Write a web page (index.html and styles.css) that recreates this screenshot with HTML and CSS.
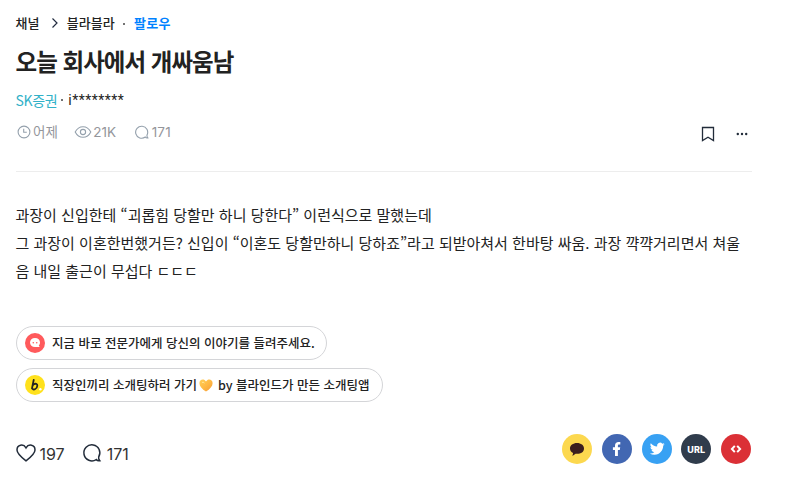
FILE: index.html
```html
<!DOCTYPE html>
<html lang="ko">
<head>
<meta charset="utf-8">
<title>오늘 회사에서 개싸움남</title>
<link rel="stylesheet" href="styles.css">
</head>
<body>
<main class="post">
  <nav class="crumbs">
    <a class="crumb-root">채널</a>
    <svg class="chevron" width="8" height="12" viewBox="0 0 8 12"><path d="M1.5 1.5 6 6 1.5 10.5"/></svg>
    <a class="crumb-topic">블라블라</a>
    <i class="dot"></i>
    <a class="follow">팔로우</a>
  </nav>
  <h1>오늘 회사에서 개싸움남</h1>
  <p class="author"><span class="company">SK증권</span><i class="dot"></i><span class="nick">i********</span></p>
  <div class="meta">
    <svg class="m-clock" width="14" height="14" viewBox="0 0 14 14"><circle cx="7" cy="7" r="5.9"/><path d="M6.7 3.7V7.2H9.8"/></svg>
    <span class="m-date">어제</span>
    <svg class="m-eye" width="18" height="14" viewBox="0 0 18 14"><path d="M1.2 7C3 3.5 5.7 1.7 9 1.7S15 3.500 16.800 7C15 10.500 12.300 12.300 9 12.300S3 10.500 1.200 7Z"/><circle cx="9" cy="7" r="2.600"/></svg>
    <span class="m-views">21K</span>
    <svg class="m-talk" width="14" height="14" viewBox="0 0 20 20"><path d="M17.200 14.200A8.600 8.600 0 1 0 14.700 17.200C15.600 18.300 16.700 18.700 18.300 18.400C17.300 17.200 16.900 15.800 17.200 14.200Z"/></svg>
    <span class="m-count">171</span>
    <div class="tools">
      <svg width="14" height="16" viewBox="0 0 14 16"><path d="M1.500 1.500H12.500V14.500L7 11.300 1.500 14.500Z"/></svg>
      <svg class="more" width="12" height="4" viewBox="0 0 12 4"><circle cx="1.800" cy="2" r="1.200"/><circle cx="6" cy="2" r="1.200"/><circle cx="10.200" cy="2" r="1.200"/></svg>
    </div>
  </div>
  <article>
    <p class="l1">과장이 신입한테 “괴롭힘 당할만 하니 당한다” 이런식으로 말했는데</p>
    <p class="l2">그 과장이 이혼한번했거든? 신입이 “이혼도 당할만하니 당하죠”라고 되받아쳐서 한바탕 싸움. 과장 꺅꺅거리면서 쳐울</p>
    <p class="l3">음 내일 출근이 무섭다 ㄷㄷㄷ</p>
  </article>
  <div class="links">
    <a class="pill"><svg width="20" height="20" viewBox="0 0 20 20"><circle cx="10" cy="10" r="10" fill="#ff5a5c"/><path d="M10 5.100C7 5.100 5 7 5 9.500S7 14 10 14H14.700L13.800 12.500C14.700 11.600 15 10.700 15 9.500C15 7 13 5.100 10 5.100Z" fill="#fff"/><circle cx="8.300" cy="9.700" r=".8" fill="#ff5a5c"/><circle cx="11.700" cy="9.700" r=".8" fill="#ff5a5c"/></svg><span class="p1">지금 바로 전문가에게 당신의 이야기를 들려주세요.</span></a>
    <a class="pill"><svg width="20" height="20" viewBox="0 0 20 20"><circle cx="10" cy="10" r="10" fill="#ffe11c"/><path d="M8.700 5 7 13.400M7.500 11C8 8.500 12.500 7.600 12.300 10.800C12.100 14.400 8 15.700 7.100 13.200" fill="none" stroke="#222" stroke-width="1.800" stroke-linecap="round" stroke-linejoin="round"/><circle cx="15.400" cy="14.300" r="1.200" fill="#fff"/></svg><span class="p2">직장인끼리 소개팅하러 가기</span><svg class="heart" width="14" height="13" viewBox="0 0 14 13"><defs><linearGradient id="gold" x2="1" y2="1"><stop stop-color="#ffcf58"/><stop offset=".5" stop-color="#ffb944"/><stop offset="1" stop-color="#f49a37"/></linearGradient></defs><path d="M7 12.500C3 10 .4 7.300.4 4.200C.4.300 5-.8 7 2.600C9-.8 13.600.300 13.600 4.200C13.600 7.300 11 10 7 12.500Z" fill="url(#gold)"/><path d="M3 3.600Q4.500 2.100 5.300 4.300" stroke="#ffe99b" fill="none"/></svg><span class="p3">by 블라인드가 만든 소개팅앱</span></a>
  </div>
  <footer>
    <svg class="f-icon" width="20" height="18" viewBox="0 0 20 18"><path d="M10 16.800C5 12.900 1 9.700 1 5.900C1 .8 7.300-.7 10 3.900C12.700-.7 19 .8 19 5.900C19 9.700 15 12.900 10 16.800Z"/></svg>
    <span class="likes">197</span>
    <svg class="f-icon" width="20" height="20" viewBox="0 0 20 20"><path d="M16.700 14A8 8 0 1 0 14.300 16.500C15.100 17.600 16.200 18 17.800 17.700C16.800 16.500 16.400 15.200 16.700 14Z"/></svg>
    <span class="comments">171</span>
    <div class="share">
      <a class="kakao"><svg width="30" height="30" viewBox="0 0 30 30"><path fill="#3b1e1e" d="M15 8.900C11 8.900 8 11.200 8 14.400C8 16.400 9.200 18.100 11.100 19L10.400 22L13.600 19.800C18.600 20.300 22 17.900 22 14.400C22 11.200 19 8.900 15 8.900Z"/></svg></a>
      <a class="facebook"><svg width="30" height="30" viewBox="0 0 30 30"><path fill="#fff" d="M13 22V15.900H10.900V13.200H13V11.700C13 9.200 14.400 8 16.500 8H18.300V10.500H17.200C16.200 10.500 15.900 11 15.900 11.900V13.200H18.200L17.800 15.900H15.900V22Z"/></svg></a>
      <a class="twitter"><svg width="30" height="30" viewBox="0 0 30 30"><path transform="translate(7.800 7.300) scale(.62)" fill="#fff" d="M23.950 4.570a10 10 0 0 1-2.820.77 4.960 4.960 0 0 0 2.160-2.720c-.95.550-2 .95-3.130 1.180a4.920 4.920 0 0 0-8.380 4.480C7.690 8.090 4.070 6.130 1.640 3.160a4.820 4.820 0 0 0-.67 2.480c0 1.710.87 3.210 2.190 4.100a4.900 4.900 0 0 1-2.230-.62v.06a4.920 4.920 0 0 0 3.950 4.830 5 5 0 0 1-2.210.09 4.940 4.940 0 0 0 4.600 3.420A9.870 9.870 0 0 1 0 19.540a14 14 0 0 0 7.550 2.210c9.050 0 14-7.500 14-13.980 0-.21 0-.42-.02-.63a9.940 9.940 0 0 0 2.420-2.570Z"/></svg></a>
      <a class="url">URL</a>
      <a class="embed"><svg width="30" height="30" viewBox="0 0 30 30"><path d="M13.800 11.900 10.900 15 13.800 18.100M16.200 11.900 19.100 15 16.200 18.100"/></svg></a>
    </div>
  </footer>
</main>
</body>
</html>
```
FILE: styles.css
```css
* { box-sizing: border-box; }
body { margin: 0; background: #fff; color: #222; font-family: "Noto Sans CJK KR", sans-serif; overflow: hidden; }
h1, p { margin: 0; }
span, a, h1, p { white-space: nowrap; }
svg { flex: none; display: block; }
.post { width: 736.5px; margin-left: 15.5px; display: flex; flex-direction: column; }
.crumbs { display: flex; align-items: center; height: 45px; font-size: 13px; font-weight: 500; letter-spacing: 0.1px; }
.chevron { margin: 0 8px 0 11px; fill: none; stroke: #222c40; stroke-width: 1.2; }
.dot { width: 2px; height: 2px; background: #444; border-radius: 1px; margin: 2px 9px 0 8px; }
.follow { color: #0082ff; font-weight: 700; letter-spacing: 0.3px; }
h1 { height: 32px; line-height: 32px; font-size: 23.5px; font-weight: 700; letter-spacing: -0.95px; }
.author { display: flex; align-items: center; height: 45px; font-size: 14px; }
.author .dot { margin: 1px 5px 0 4px; }
.company { color: #31b1c8; letter-spacing: -0.35px; }
.nick { font-family: Roboto, sans-serif; letter-spacing: 0.5px; margin-top: 1px; }
.meta { display: flex; align-items: center; box-sizing: content-box; height: 20px; padding-bottom: 29px; border-bottom: 1px solid #ededed; color: #94969b; font-size: 13.5px; }
.meta svg { fill: none; stroke: #94a0ac; stroke-width: 1.1; }
.meta .m-talk { margin-left: 18.5px; stroke-width: 1.600; }
.m-clock { margin-left: 1.5px; }
.m-date { margin: -2px 0 0 2px; }
.m-eye { margin-left: 16px; }
.m-views, .m-count { font-family: Inter, sans-serif; margin-left: 1.5px; }
.m-count { margin-left: 3px; letter-spacing: 0.2px; }
.tools { display: flex; align-items: center; gap: 21px; margin: 4px 4px 0 auto; }
.tools svg { stroke: #222c3a; stroke-width: 1.300; }
.tools .more { fill: #222c3a; stroke: none; }
article { margin-top: 29px; height: 84px; font-size: 15px; line-height: 28px; }
.links { display: flex; flex-direction: column; align-items: flex-start; gap: 8px; margin: 41px 0 0 0.5px; }
.pill { display: flex; align-items: center; height: 34px; padding: 0 12px 0 8px; border: 1px solid #d4d5d8; border-radius: 17px; font-size: 12.5px; font-weight: 500; color: #222; }
.pill span { margin: -2px 0 0 7px; }
.pill .p1 { margin-right: -1px; }
.pill .heart { margin-left: 2px; }
.pill .p3 { margin-left: 5px; }
footer { display: flex; align-items: center; height: 30px; margin: 32px 0 0 0.5px; font-family: Inter, sans-serif; font-size: 16px; color: #333; }
.f-icon { fill: none; stroke: #222c3a; stroke-width: 1.500; margin-top: 8px; }
.likes, .comments { margin: 10px 0 0 3.5px; }
.comments { margin-left: 4.5px; }
.likes { margin-right: 17.5px; }
.share { display: flex; gap: 9.700px; margin: 0 1px 0 auto; }
.share a { width: 30px; height: 30px; border-radius: 50%; display: flex; align-items: center; justify-content: center; }
.kakao { background: #fcd84f; }
.facebook { background: #4267b2; }
.twitter { background: #38a1f3; }
.share .url { background: #303c4c; color: #fff; font-size: 9px; font-weight: 800; letter-spacing: 0.15px; }
.embed { background: #db3036; }
.embed svg { fill: none; stroke: #fff; stroke-width: 2; }
```
